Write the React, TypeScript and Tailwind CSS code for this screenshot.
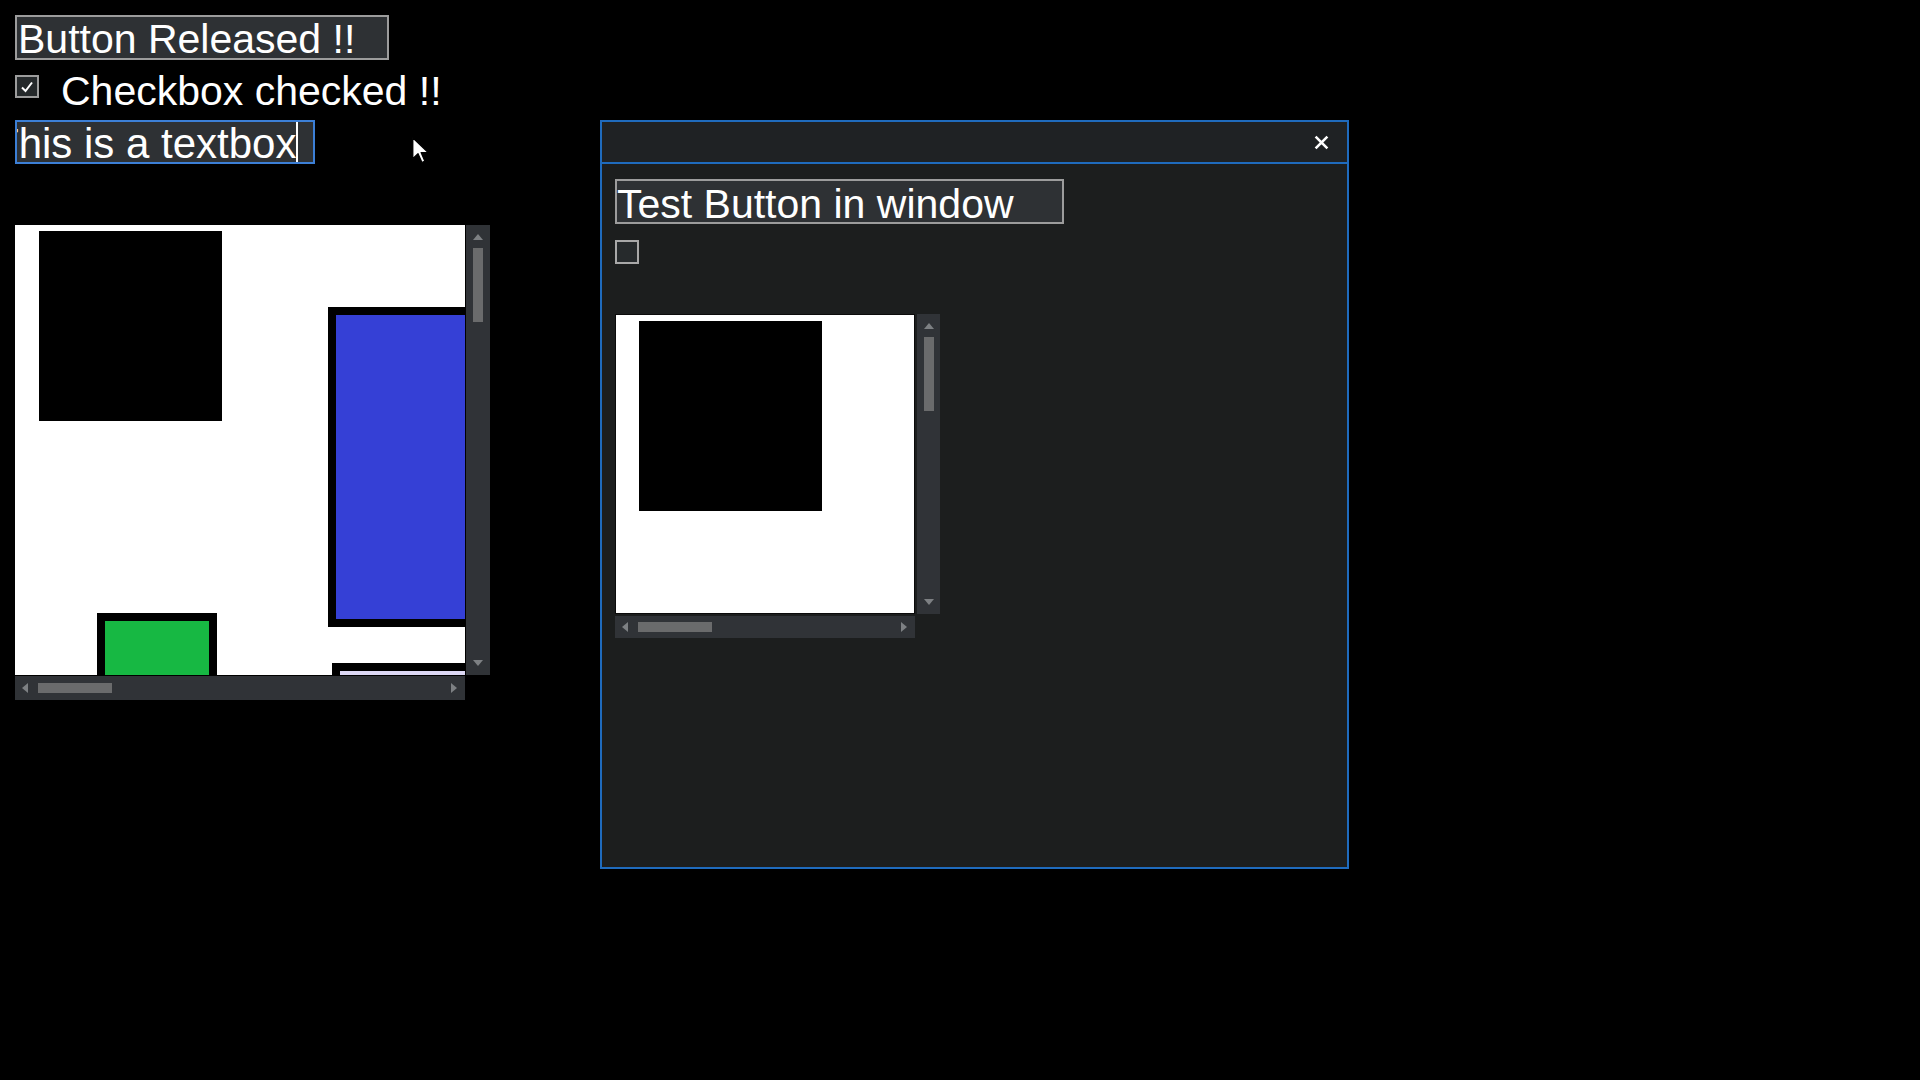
import React from 'react';

const font = { fontFamily: '"Liberation Sans", Arial, sans-serif' };

const Tri = ({ dir }: { dir: 'up' | 'down' | 'left' | 'right' }) => {
  const pts = {
    up: '0,6 5,0 10,6',
    down: '0,0 10,0 5,6',
    left: '6,0 6,10 0,5',
    right: '0,0 0,10 6,5',
  }[dir];
  const vertical = dir === 'up' || dir === 'down';
  return (
    <svg width={vertical ? 10 : 6} height={vertical ? 6 : 10} viewBox={vertical ? '0 0 10 6' : '0 0 6 10'}>
      <polygon points={pts} fill="#7d8083" />
    </svg>
  );
};

const VScroll = ({ h, w }: { h: number; w: number }) => (
  <div className="flex flex-col items-center bg-[#303337]" style={{ width: w, height: h }}>
    <div className="pt-[9px] pb-[8px]">
      <Tri dir="up" />
    </div>
    <div className="w-[10px] h-[74px] bg-[#6a6b6c]" />
    <div className="flex-1" />
    <div className="pb-[9px]">
      <Tri dir="down" />
    </div>
  </div>
);

const HScroll = ({ w, h }: { w: number; h: number }) => (
  <div className="flex items-center bg-[#303337]" style={{ width: w, height: h }}>
    <div className="pl-[7px] pr-[10px] flex">
      <Tri dir="left" />
    </div>
    <div className="w-[74px] h-[10px] bg-[#6a6b6c]" />
    <div className="flex-1" />
    <div className="pr-[8px] flex">
      <Tri dir="right" />
    </div>
  </div>
);

const Cursor = () => (
  <svg className="absolute left-[412px] top-[137px]" width="18" height="27" viewBox="0 0 12 18">
    <path d="M0.5 0.5 L0.5 14.5 L4 11.2 L6.6 17 L8.6 16.1 L6.1 10.4 L10.8 10.4 Z" fill="#fff" stroke="#000" strokeWidth="0.9" strokeLinejoin="round" />
  </svg>
);

export default function App() {
  return (
    <div className="relative w-[1920px] h-[1080px] bg-black overflow-hidden text-white" style={font}>
      <div className="flex flex-col items-start pl-[15px] pt-[15px]">
        <div className="w-[374px] h-[45px] border-2 border-[#9c9c9c] bg-[#2e3134] text-[41px] leading-[40px] pt-[2px] pl-px whitespace-nowrap">
          Button Released !!
        </div>

        <div className="flex items-start mt-[7px]">
          <div className="mt-[8px] w-[24px] h-[23px] border-2 border-[#9c9c9c] bg-[#25292b] flex items-center justify-center">
            <svg width="14" height="12" viewBox="0 0 14 12">
              <path d="M2 6.5 L5.5 10 L12 1.5" fill="none" stroke="#fff" strokeWidth="2" />
            </svg>
          </div>
          <div className="ml-[22px] pt-[2px] text-[41px] leading-[45px] whitespace-nowrap">Checkbox checked !!</div>
        </div>

        <div className="mt-[6px] w-[300px] h-[44px] border-2 border-[#3c7fd6] bg-[#2e3134] overflow-hidden flex items-stretch">
          <span className="-ml-[24px] text-[42px] leading-[43px] whitespace-nowrap">This is a textbox</span>
          <span className="w-[2px] bg-white shrink-0" />
        </div>

        <div className="mt-[61px] flex flex-col">
          <div className="flex gap-px">
            <div className="relative w-[450px] h-[450px] bg-white overflow-hidden">
              <div className="absolute left-[24px] top-[6px] w-[183px] h-[190px] bg-black" />
              <div className="absolute left-[313px] top-[82px] w-[200px] h-[320px] border-8 border-black bg-[#3540d6]" />
              <div className="absolute left-[82px] top-[388px] w-[120px] h-[100px] border-8 border-black bg-[#17b843]" />
              <div className="absolute left-[317px] top-[438px] w-[200px] h-[100px] border-8 border-black bg-[#dcd8f4]" />
            </div>
            <VScroll w={24} h={450} />
          </div>
          <div className="mt-px">
            <HScroll w={450} h={24} />
          </div>
        </div>
      </div>

      <div className="absolute left-[600px] top-[120px] w-[749px] h-[749px] border-2 border-[#1f6bbd] bg-[#1c1e1e] flex flex-col">
        <div className="h-[42px] bg-[#1f2224] border-b-2 border-[#1f6bbd] flex items-center justify-end pr-[18px]">
          <svg width="15" height="15" viewBox="0 0 14 14">
            <path d="M1.5 1.5 L12.5 12.5 M12.5 1.5 L1.5 12.5" stroke="#fff" strokeWidth="2.4" />
          </svg>
        </div>
        <div className="flex flex-col items-start pl-[13px] pt-[15px]">
          <div className="w-[449px] h-[45px] border-2 border-[#9c9c9c] bg-[#2e3134] text-[41px] leading-[40px] pt-[3px] whitespace-nowrap">
            Test Button in window
          </div>
          <div className="mt-[16px] w-[24px] h-[24px] border-2 border-[#a8a8a8] bg-[#262a2c]" />
          <div className="mt-[50px] flex flex-col">
            <div className="flex gap-[2px]">
              <div className="relative w-[300px] h-[300px] bg-white border border-[#0b0b0b] overflow-hidden">
                <div className="absolute left-[23px] top-[6px] w-[183px] h-[190px] bg-black" />
              </div>
              <VScroll w={23} h={300} />
            </div>
            <div className="mt-[2px]">
              <HScroll w={300} h={22} />
            </div>
          </div>
        </div>
      </div>

      <Cursor />
    </div>
  );
}
